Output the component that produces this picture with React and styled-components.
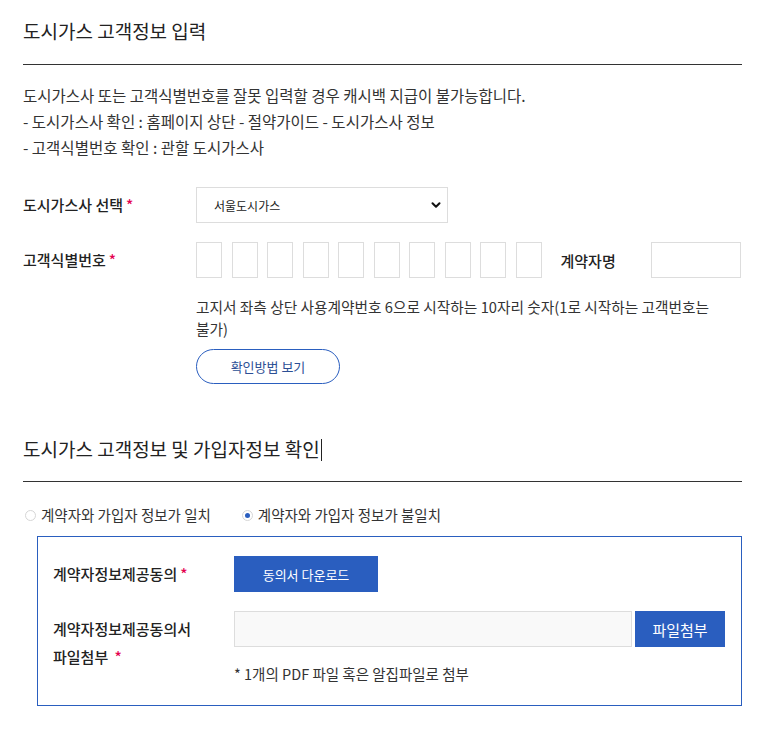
import React, { useState } from "react";
import styled, { createGlobalStyle } from "styled-components";
import { ChevronDown } from "lucide-react";

const BLUE = "#2a5ebf";

const GlobalStyle = createGlobalStyle`
  body {
    margin: 0;
    background: #fff;
    color: #333;
    font-family: "Noto Sans CJK KR", "Noto Sans", sans-serif;
  }
  * { box-sizing: border-box; }
`;

const Page = styled.div`
  width: 742px;
  padding: 16px 0 0 23px;
`;

const SectionTitle = styled.h2`
  margin: 0;
  font-size: 19px;
  line-height: 30px;
  font-weight: 400;
  color: #222;
  padding-bottom: ${p => p.$pb || 18}px;
  border-bottom: 1px solid #333;
  margin-top: ${p => p.$mt || 0}px;
`;

const Caret = styled.span`
  display: inline-block;
  width: 1px;
  height: 22px;
  background: #222;
  vertical-align: -4px;
  margin-left: 1px;
`;

const Intro = styled.p`
  margin: 17px 0 0;
  font-size: 15.5px;
  line-height: 26px;
  color: #333;
`;

const FormRow = styled.div`
  display: flex;
  align-items: ${p => (p.$top ? "flex-start" : "center")};
  margin-top: ${p => p.$mt}px;
`;

const Label = styled.div`
  width: 173px;
  flex: none;
  font-size: 15px;
  font-weight: 500;
  color: #222;
  line-height: 36px;
`;

const Req = styled.span`
  color: #e4004f;
  margin-left: 3px;
`;

const SelectWrap = styled.div`
  position: relative;
  width: 252px;
  height: 36px;
  & svg {
    position: absolute;
    right: 5px;
    top: 11px;
    pointer-events: none;
  }
`;

const Select = styled.select`
  appearance: none;
  width: 100%;
  height: 100%;
  border: 1px solid #ddd;
  background: #fff;
  padding: 0 30px 0 17px;
  font-family: inherit;
  font-size: 12px;
  color: #222;
  outline: none;
`;

const Field = styled.div`
  display: flex;
  flex-direction: column;
`;

const DigitRow = styled.div`
  display: flex;
  align-items: center;
`;

const Digits = styled.div`
  display: flex;
  gap: 9.5px;
`;

const DigitBox = styled.input`
  width: 26px;
  height: 36px;
  border: 1px solid #ddd;
  padding: 0;
  text-align: center;
  font-family: inherit;
  outline: none;
`;

const InlineLabel = styled.span`
  font-size: 15px;
  font-weight: 500;
  color: #222;
  margin: 0 35px 0 19px;
`;

const NameInput = styled.input`
  width: 90px;
  height: 36px;
  border: 1px solid #ddd;
  outline: none;
`;

const Help = styled.p`
  margin: 18px 0 0;
  max-width: 546px;
  font-size: 14.7px;
  line-height: 22px;
  color: #333;
  word-break: keep-all;
`;

const PillButton = styled.button`
  margin-top: 9px;
  width: 144px;
  height: 35px;
  border: 1px solid ${BLUE};
  border-radius: 18px;
  background: #fff;
  color: #2c4f95;
  font-family: inherit;
  font-size: 13px;
  cursor: pointer;
`;

const RadioGroup = styled.div`
  display: flex;
  gap: 31px;
  margin-top: 22px;
  padding-left: 2px;
`;

const RadioOption = styled.label`
  display: flex;
  align-items: center;
  gap: 5px;
  font-size: 14.5px;
  line-height: 22px;
  color: #333;
  cursor: pointer;
`;

const RadioDot = styled.span`
  width: 11px;
  height: 11px;
  border-radius: 50%;
  border: 1px solid #d6d6d6;
  display: flex;
  align-items: center;
  justify-content: center;
  &::after {
    content: "";
    width: 5px;
    height: 5px;
    border-radius: 50%;
    background: ${p => (p.$on ? BLUE : "transparent")};
  }
`;

const ConsentBox = styled.div`
  margin-top: 10px;
  margin-left: 14px;
  border: 1px solid ${BLUE};
  padding: 19px 15px 20px 15px;
`;

const BoxLabel = styled.div`
  width: 181px;
  flex: none;
  font-size: 15px;
  font-weight: 500;
  color: #222;
  line-height: 28px;
  padding-top: ${p => (p.$pt ? 4 : 0)}px;
`;

const SolidButton = styled.button`
  width: ${p => p.$w}px;
  height: 36px;
  border: 0;
  background: ${BLUE};
  color: #fff;
  font-family: inherit;
  font-size: ${p => p.$fs || 13}px;
  cursor: pointer;
  flex: none;
`;

const FileRow = styled.div`
  display: flex;
  gap: 3px;
`;

const FileInput = styled.input`
  width: 398px;
  height: 36px;
  border: 1px solid #ddd;
  background: #f9f9f9;
  outline: none;
`;

const Note = styled.p`
  margin: 16px 0 0;
  font-size: 14.5px;
  line-height: 22px;
  color: #333;
`;

export default function App() {
  const [match, setMatch] = useState(false);

  return (
    <Page>
      <GlobalStyle />
      <SectionTitle>도시가스 고객정보 입력</SectionTitle>
      <Intro>
        도시가스사 또는 고객식별번호를 잘못 입력할 경우 캐시백 지급이 불가능합니다.
        <br />- 도시가스사 확인 : 홈페이지 상단 - 절약가이드 - 도시가스사 정보
        <br />- 고객식별번호 확인 : 관할 도시가스사
      </Intro>

      <FormRow $mt={27}>
        <Label>
          도시가스사 선택<Req>*</Req>
        </Label>
        <SelectWrap>
          <Select defaultValue="seoul">
            <option value="seoul">서울도시가스</option>
          </Select>
          <ChevronDown size={14} strokeWidth={3.5} color="#111" />
        </SelectWrap>
      </FormRow>

      <FormRow $mt={19} $top>
        <Label>
          고객식별번호<Req>*</Req>
        </Label>
        <Field>
          <DigitRow>
            <Digits>
              {Array.from({ length: 10 }).map((_, i) => (
                <DigitBox key={i} maxLength={1} />
              ))}
            </Digits>
            <InlineLabel>계약자명</InlineLabel>
            <NameInput />
          </DigitRow>
          <Help>
            고지서 좌측 상단 사용계약번호 6으로 시작하는 10자리 숫자(1로 시작하는 고객번호는 불가)
          </Help>
          <div>
            <PillButton>확인방법 보기</PillButton>
          </div>
        </Field>
      </FormRow>

      <SectionTitle $mt={50} $pb={17}>
        도시가스 고객정보 및 가입자정보 확인<Caret />
      </SectionTitle>

      <RadioGroup>
        <RadioOption onClick={() => setMatch(true)}>
          <RadioDot $on={match} />
          계약자와 가입자 정보가 일치
        </RadioOption>
        <RadioOption onClick={() => setMatch(false)}>
          <RadioDot $on={!match} />
          계약자와 가입자 정보가 불일치
        </RadioOption>
      </RadioGroup>

      <ConsentBox>
        <FormRow $mt={0}>
          <BoxLabel>
            계약자정보제공동의<Req>*</Req>
          </BoxLabel>
          <SolidButton $w={144}>동의서 다운로드</SolidButton>
        </FormRow>
        <FormRow $mt={19} $top>
          <BoxLabel $pt>
            계약자정보제공동의서
            <br />
            파일첨부 <Req>*</Req>
          </BoxLabel>
          <Field>
            <FileRow>
              <FileInput readOnly />
              <SolidButton $w={90} $fs={15}>파일첨부</SolidButton>
            </FileRow>
            <Note>* 1개의 PDF 파일 혹은 알집파일로 첨부</Note>
          </Field>
        </FormRow>
      </ConsentBox>
    </Page>
  );
}
